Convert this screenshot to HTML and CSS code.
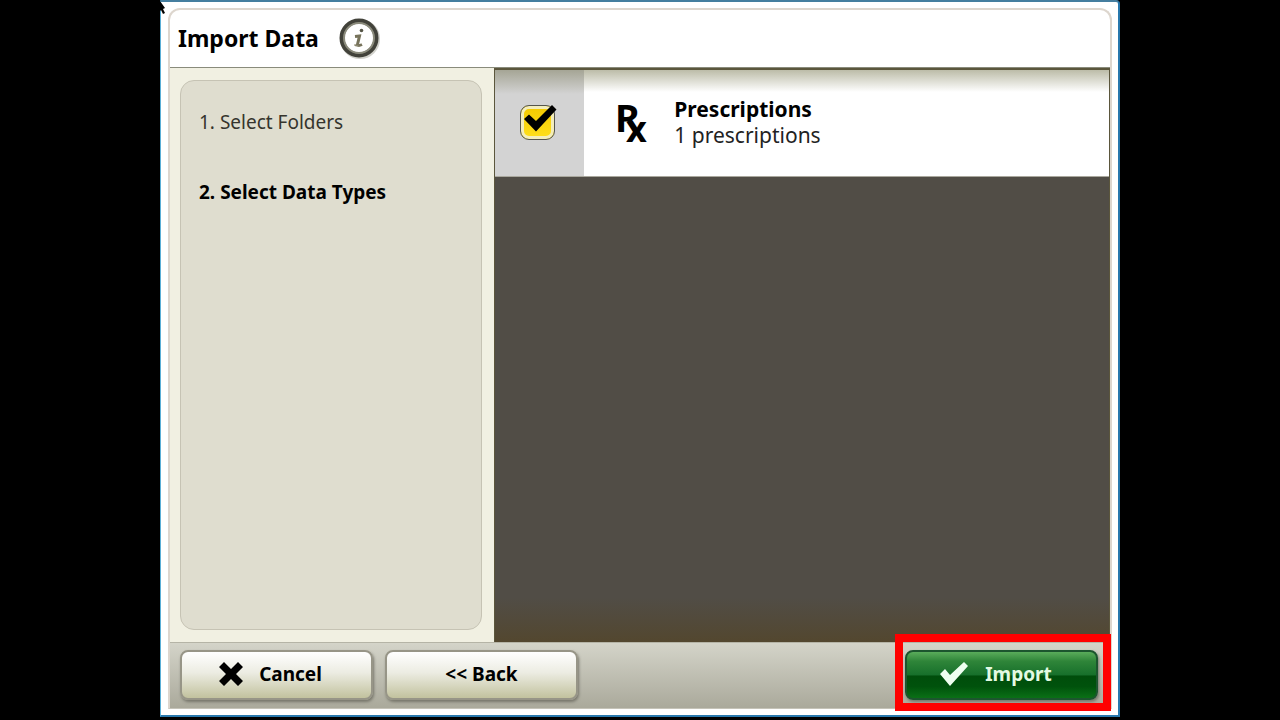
FILE: index.html
```html
<!DOCTYPE html>
<html lang="en">
<head>
    <meta charset="UTF-8">
    <title>Import Data</title>
    <link rel="stylesheet" href="styles.css">
</head>
<body>
    <div class="window">
        <svg class="pointer" viewBox="0 0 6 14" aria-hidden="true">
            <path d="M0 0 L5 7 L3 8 L5 12 L3 13 L1 9 L0 10 Z"/>
        </svg>
        <div class="dialog">
            <header class="header">
                <h1>Import Data</h1>
                <button class="info" type="button" aria-label="Information">
                    <svg viewBox="0 0 42 42">
                        <circle cx="22" cy="22" r="18" fill="none" stroke="#d2d2cc" stroke-width="4"/>
                        <circle cx="21" cy="21" r="17" fill="#fff" stroke="#42423a" stroke-width="5"/>
                        <circle cx="21" cy="21" r="15" fill="none" stroke="#8b8b7c" stroke-width="2"/>
                        <circle cx="23.500" cy="13.500" r="1.800" fill="#555546"/>
                        <path d="M17 19.500 L21.500 19 L19.500 27.500 Q20 29.500 24 27.500" fill="none" stroke="#77735b" stroke-width="3"/>
                        <path d="M16.500 27.500 Q18 29.500 20.500 28.500" fill="none" stroke="#8c8870" stroke-width="1.500"/>
                    </svg>
                </button>
            </header>

            <main class="main">
                <nav class="sidebar">
                    <ol class="steps">
                        <li>1. Select Folders</li>
                        <li class="current">2. Select Data Types</li>
                    </ol>
                </nav>
                <section class="content">
                    <div class="row">
                        <div class="check-cell">
                            <span class="check">
                                <input type="checkbox" id="prescriptions" checked>
                                <svg class="tick" viewBox="0 0 40 36" aria-hidden="true">
                                    <path d="M6 15 L11 10.500 L18 17 L34 1 L38.500 5.500 L18 27.500 Z"/>
                                </svg>
                            </span>
                        </div>
                        <label class="type" for="prescriptions">
                            <svg class="rx" viewBox="0 0 34 44" aria-hidden="true">
                                <text x="-1" y="32" font-size="38">R</text>
                                <text x="10" y="42" font-size="36">x</text>
                            </svg>
                            <span class="type-text">
                                <strong>Prescriptions</strong>
                                <span>1 prescriptions</span>
                            </span>
                        </label>
                    </div>
                </section>
            </main>

            <footer class="footer">
                <button class="btn btn-icon" type="button">
                    <svg class="cross" viewBox="0 0 24 24" aria-hidden="true">
                        <path d="M5 0 L12 7 L19 0 L24 5 L17 12 L24 19 L19 24 L12 17 L5 24 L0 19 L7 12 L0 5 Z"/>
                    </svg>
                    Cancel
                </button>
                <button class="btn" type="button">&lt;&lt; Back</button>
                <div class="highlight">
                    <button class="btn btn-icon btn-import" type="button">
                        <svg class="mark" viewBox="0 0 30 26" aria-hidden="true">
                            <path d="M1 13 L6 8 L11 14 L25 1 L29 5 L11 25 Z"/>
                        </svg>
                        Import
                    </button>
                </div>
            </footer>
        </div>
    </div>
</body>
</html>
```

FILE: styles.css
```css
* {
    box-sizing: border-box;
}

body {
    margin: 0;
    height: 100vh;
    padding-bottom: 3px;
    background-color: #000;
    color: #000;
    font-family: "Noto Sans", "Open Sans", sans-serif;
    font-size: 19px;
    line-height: 26px;
}

.window {
    position: relative;
    width: 75%;
    height: 100%;
    margin: 0 auto;
    padding: 6px 6px 6px 7px;
    background-color: #fff;
    border: 2px solid #2878ad;
    border-left: 1px solid #5aaed6;
    border-top-color: #457e9f;
    border-top-right-radius: 4px;
}

.pointer {
    position: absolute;
    top: -1px;
    left: -1px;
    width: 6px;
    height: 14px;
}

.dialog {
    display: flex;
    flex-direction: column;
    height: 100%;
    border: 2px solid #ddd6ce;
    border-bottom: 1px solid #c5c3b8;
    border-radius: 12px 12px 0 0;
}

.header {
    display: flex;
    align-items: center;
    gap: 19px;
    height: 58px;
    flex-shrink: 0;
    padding: 0 8px 2px;
    border-bottom: 1px solid #898b7b;
}

h1 {
    margin: 0;
    font-size: 23px;
    line-height: 32px;
}

.info {
    width: 42px;
    height: 42px;
    padding: 0;
    border: none;
    background: none;
}

.info svg {
    display: block;
}

.main {
    display: flex;
    flex: 1;
    min-height: 0;
}

.sidebar {
    width: 34.5%;
    padding: 12px;
    padding-left: 10px;
    background-color: #f1f0e2;
}

.steps {
    height: 100%;
    margin: 0;
    padding: 28px 18px;
    list-style: none;
    background-color: #dfddcf;
    border: 1px solid #c6c3b4;
    border-radius: 14px;
    color: #35342d;
}

.steps li {
    margin-bottom: 44px;
}

.steps .current {
    font-weight: bold;
    color: #000;
}

.content {
    flex: 1;
    border: 1px solid #5b563c;
    border-top-width: 2px;
    border-bottom: none;
    background: linear-gradient(#514d46 calc(100% - 44px), #53472f);
}

.row {
    display: flex;
    height: 107px;
    background: linear-gradient(#bcbca8, #fff 22px);
    border-bottom: 1px solid #aaa89e;
}

.check-cell {
    display: flex;
    align-items: center;
    justify-content: center;
    width: 89px;
    padding-right: 4px;
    background: linear-gradient(#a5a595, #d3d3d3 24px);
}

.check {
    position: relative;
    width: 40px;
    height: 36px;
}

.check input {
    appearance: none;
    display: block;
    width: 35px;
    height: 35px;
    margin: 0 0 0 2px;
    background: linear-gradient(#f4c900, #ffe01c);
    border: 1px solid #55554c;
    border-radius: 9px;
    box-shadow: inset 0 0 0 3px #f3edbb;
}

.tick {
    position: absolute;
    top: -1px;
    left: 0;
    width: 40px;
    height: 36px;
    pointer-events: none;
}

.type {
    display: flex;
    flex: 1;
    align-items: center;
    gap: 24px;
    padding: 0 0 2px 32px;
    font-size: 21px;
}

.rx {
    width: 34px;
    height: 44px;
    overflow: visible;
    font-weight: bold;
}

.type-text {
    display: flex;
    flex-direction: column;
}

.type-text span {
    color: #222;
}

.footer {
    display: flex;
    align-items: center;
    gap: 12px;
    height: 66px;
    flex-shrink: 0;
    padding: 0 12px 2px 10px;
    background: linear-gradient(#d4d4c9, #aaa99b);
    border-top: 1px solid #b5b4a6;
}

.btn {
    display: flex;
    align-items: center;
    justify-content: center;
    gap: 16px;
    width: 193px;
    height: 50px;
    padding: 0 0 2px;
    border: 2px solid #979587;
    border-radius: 8px;
    background: linear-gradient(#fff, #ecece2 45%, #c2c29e);
    box-shadow: 1px 2px 3px #77766b;
    color: #000;
    font: bold 19px "Noto Sans", "Open Sans", sans-serif;
}

.btn-icon {
    padding-right: 12px;
}

.cross {
    width: 24px;
    height: 24px;
}

.mark {
    width: 30px;
    height: 26px;
    fill: #effff0;
}

.btn-import {
    border-color: #1c552e;
    background: linear-gradient(#5aac5b, #2f8539 20%, #17702b 50%, #004d0b 52%, #00520c 75%, #0a7016);
    color: #e4fae3;
}

.highlight {
    position: relative;
    margin-left: auto;
}

.highlight::after {
    content: "";
    position: absolute;
    top: -16px;
    right: -13px;
    bottom: -11px;
    left: -10px;
    border: 8px solid #f00;
    pointer-events: none;
}
```
